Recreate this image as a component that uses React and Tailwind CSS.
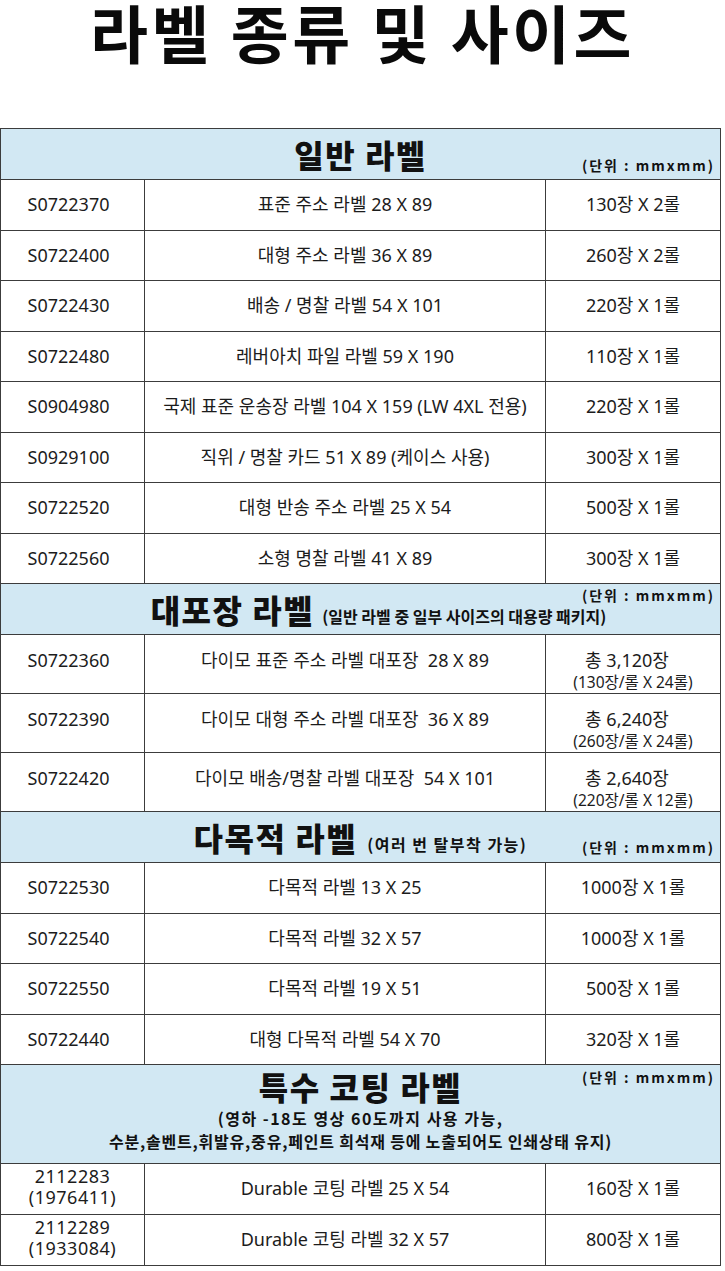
const general = [
  ['S0722370', '표준 주소 라벨 28 X 89', '130장 X 2롤'],
  ['S0722400', '대형 주소 라벨 36 X 89', '260장 X 2롤'],
  ['S0722430', '배송 / 명찰 라벨 54 X 101', '220장 X 1롤'],
  ['S0722480', '레버아치 파일 라벨 59 X 190', '110장 X 1롤'],
  ['S0904980', '국제 표준 운송장 라벨 104 X 159 (LW 4XL 전용)', '220장 X 1롤'],
  ['S0929100', '직위 / 명찰 카드 51 X 89 (케이스 사용)', '300장 X 1롤'],
  ['S0722520', '대형 반송 주소 라벨 25 X 54', '500장 X 1롤'],
  ['S0722560', '소형 명찰 라벨 41 X 89', '300장 X 1롤'],
]

const bulk = [
  ['S0722360', '다이모 표준 주소 라벨 대포장  28 X 89', '총 3,120장', '(130장/롤 X 24롤)'],
  ['S0722390', '다이모 대형 주소 라벨 대포장  36 X 89', '총 6,240장', '(260장/롤 X 24롤)'],
  ['S0722420', '다이모 배송/명찰 라벨 대포장  54 X 101', '총 2,640장', '(220장/롤 X 12롤)'],
]

const multi = [
  ['S0722530', '다목적 라벨 13 X 25', '1000장 X 1롤'],
  ['S0722540', '다목적 라벨 32 X 57', '1000장 X 1롤'],
  ['S0722550', '다목적 라벨 19 X 51', '500장 X 1롤'],
  ['S0722440', '대형 다목적 라벨 54 X 70', '320장 X 1롤'],
]

const coated = [
  ['2112283', '(1976411)', 'Durable 코팅 라벨 25 X 54', '160장 X 1롤'],
  ['2112289', '(1933084)', 'Durable 코팅 라벨 32 X 57', '800장 X 1롤'],
]

function Unit({ pos }) {
  return (
    <span className={`absolute right-[5px] ${pos} text-[14px] leading-[16px] font-bold tracking-[2px] text-[#111]`}>
      (단위 : mmxmm)
    </span>
  )
}

// 일반 한 줄짜리 행
function Row({ code, name, qty }) {
  return (
    <div className="grid grid-cols-[143px_401px_1fr] h-[50.5px] text-[18px] text-[#1c1c1c] font-['Noto_Sans','Noto_Sans_CJK_KR',sans-serif]">
      <div className="flex items-center justify-center pr-[8px]">{code}</div>
      <div className="flex items-center justify-center border-l-[1.5px] border-[#3c3c3c] whitespace-pre">{name}</div>
      <div className="flex items-center justify-center border-l-[1.5px] border-[#3c3c3c]">{qty}</div>
    </div>
  )
}

export default function App() {
  return (
    <div className="w-[725px] min-h-[1271px] bg-white font-['Noto_Sans_CJK_KR','Noto_Sans',sans-serif] text-black">
      {/* 제목 */}
      <div className="h-[128px]">
        <h1 className="text-center text-[63px] leading-[62px] font-bold tracking-[3.5px] text-[#0a0a0a]">라벨 종류 및 사이즈</h1>
      </div>

      <div className="w-[721px] border-[1.5px] border-[#3c3c3c] flex flex-col divide-y-[1.5px] divide-[#3c3c3c]">
        {/* 일반 라벨 */}
        <div className="relative h-[51px] bg-[#d2e8f3] flex items-center justify-center">
          <span className="text-[32px] leading-[40px] font-black tracking-[1.5px] text-[#111]">일반 라벨</span>
          <Unit pos="bottom-[6px]" />
        </div>
        {general.map((r) => (
          <Row key={r[0]} code={r[0]} name={r[1]} qty={r[2]} />
        ))}

        {/* 대포장 라벨 */}
        <div className="relative h-[51px] bg-[#d2e8f3] flex items-center justify-center pl-[36px]">
          <div className="flex items-baseline gap-[8px]">
            <span className="text-[32px] leading-[40px] font-black tracking-[1.5px] text-[#111]">대포장 라벨</span>
            <span className="text-[16px] font-bold text-[#111]">(일반 라벨 중 일부 사이즈의 대용량 패키지)</span>
          </div>
          <Unit pos="top-[2.5px]" />
        </div>
        {bulk.map((r) => (
          <div key={r[0]} className="grid grid-cols-[143px_401px_1fr] h-[59px] text-[18px] text-[#1c1c1c] font-['Noto_Sans','Noto_Sans_CJK_KR',sans-serif]">
            <div className="flex items-center justify-center pr-[8px] pb-[8px]">{r[0]}</div>
            <div className="flex items-center justify-center border-l-[1.5px] border-[#3c3c3c] whitespace-pre pb-[8px]">{r[1]}</div>
            <div className="flex flex-col items-center justify-center border-l-[1.5px] border-[#3c3c3c] pt-[12px]">
              <span className="leading-[24px] pr-[12px]">{r[2]}</span>
              <span className="text-[15.5px] leading-[20px]">{r[3]}</span>
            </div>
          </div>
        ))}

        {/* 다목적 라벨 */}
        <div className="relative h-[51px] bg-[#d2e8f3] flex items-center justify-center">
          <div className="flex items-baseline gap-[10px]">
            <span className="text-[32px] leading-[40px] font-black tracking-[1.5px] text-[#111]">다목적 라벨</span>
            <span className="text-[16px] font-bold tracking-[1.5px] text-[#111]">(여러 번 탈부착 가능)</span>
          </div>
          <Unit pos="bottom-[7px]" />
        </div>
        {multi.map((r) => (
          <Row key={r[0]} code={r[0]} name={r[1]} qty={r[2]} />
        ))}

        {/* 특수 코팅 라벨 */}
        <div className="relative h-[99px] bg-[#d2e8f3] flex flex-col items-center pt-[3px]">
          <span className="text-[32px] leading-[36px] font-black tracking-[1.5px] text-[#111]">특수 코팅 라벨</span>
          <div className="mt-[3px] flex flex-col items-center text-[16px] leading-[23px] font-bold text-[#111]">
            <span className="tracking-[1.5px]">(영하 -18도 영상 60도까지 사용 가능,</span>
            <span className="tracking-[0.8px]">수분,솔벤트,휘발유,중유,페인트 희석재 등에 노출되어도 인쇄상태 유지)</span>
          </div>
          <Unit pos="top-[3.5px]" />
        </div>
        {coated.map((r) => (
          <div key={r[0]} className="grid grid-cols-[143px_401px_1fr] h-[50.5px] text-[18px] text-[#1c1c1c] font-['Noto_Sans','Noto_Sans_CJK_KR',sans-serif]">
            <div className="flex flex-col items-center justify-center leading-[21px] pb-[4px] tracking-[0.5px]">
              <span>{r[0]}</span>
              <span>{r[1]}</span>
            </div>
            <div className="flex items-center justify-center border-l-[1.5px] border-[#3c3c3c]">{r[2]}</div>
            <div className="flex items-center justify-center border-l-[1.5px] border-[#3c3c3c]">{r[3]}</div>
          </div>
        ))}
      </div>
    </div>
  )
}
